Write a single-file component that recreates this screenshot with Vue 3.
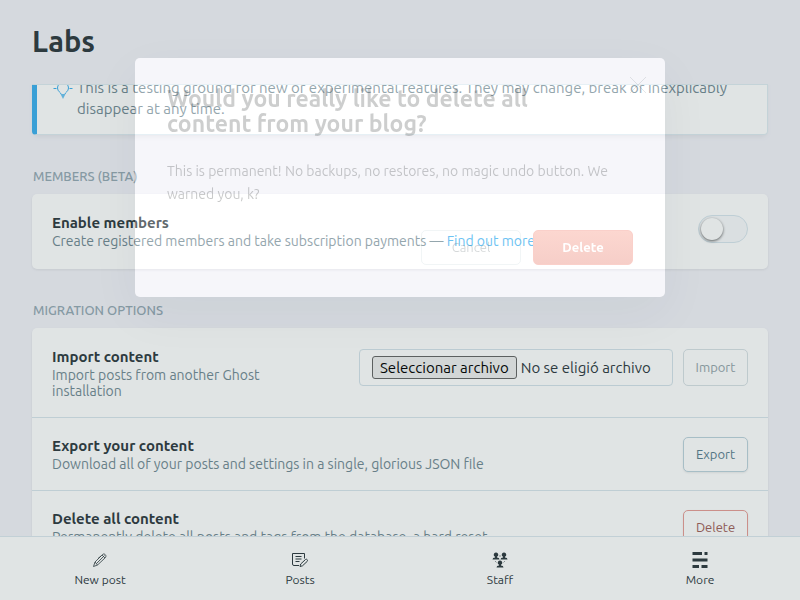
<script setup>
import { ref } from 'vue'

const membersEnabled = ref(false)
const navItems = [
  { id: 'new', label: 'New post' },
  { id: 'posts', label: 'Posts' },
  { id: 'staff', label: 'Staff' },
  { id: 'more', label: 'More' }
]
</script>

<template>
  <div class="app">
    <main class="page">
      <header class="page-header">
        <h1>Labs</h1>
      </header>
      <div class="content">
        <div class="callout">
          <svg class="bulb" viewBox="0 0 20 20" fill="none" stroke="currentColor" aria-hidden="true">
            <path d="M8 13C8 11.5 4.500 10.500 4.500 7a5.500 5.500 0 0 1 11 0c0 3.500-3.500 4.500-3.500 6M.5 7.500h3M16.500 7.500h3" />
            <path d="M7.500 13h5L11 16l-1 2-1-2z" fill="currentColor" stroke="none" opacity="0.75" />
          </svg>
          <p>This is a testing ground for new or experimental features. They may change, break or inexplicably disappear at any time.</p>
        </div>

        <section>
          <h2>Members (beta)</h2>
          <div class="card">
            <div class="row members">
              <div class="info">
                <label class="title" for="members">Enable members</label>
                <p>Create registered members and take subscription payments — <a href="#">Find out more</a></p>
              </div>
              <input id="members" v-model="membersEnabled" class="toggle" type="checkbox">
            </div>
          </div>
        </section>

        <section>
          <h2>Migration options</h2>
          <div class="card">
            <div class="row">
              <div class="info">
                <h3 class="title">Import content</h3>
                <p class="narrow">Import posts from another Ghost installation</p>
              </div>
              <div class="import">
                <label class="file">
                  <input type="file">
                  <span class="choose">Seleccionar archivo</span>
                  <span>No se eligió archivo</span>
                </label>
                <button class="btn muted" type="button">Import</button>
              </div>
            </div>
            <div class="row">
              <div class="info">
                <h3 class="title">Export your content</h3>
                <p>Download all of your posts and settings in a single, glorious JSON file</p>
              </div>
              <button class="btn" type="button">Export</button>
            </div>
            <div class="row">
              <div class="info">
                <h3 class="title">Delete all content</h3>
                <p>Permanently delete all posts and tags from the database, a hard reset</p>
              </div>
              <button class="btn danger" type="button">Delete</button>
            </div>
          </div>
        </section>
      </div>
    </main>

    <nav class="nav">
      <a v-for="item in navItems" :key="item.id" href="#">
        <svg v-if="item.id === 'new'" viewBox="0 0 16 16" fill="none" stroke="currentColor" stroke-width="0.8" aria-hidden="true">
          <path d="M1.500 14.500l1.500-4.500L10.500 2.500c1.500-1.500 4.500.5 3 3L5.500 13zM3 10l2.500 3M10 3l3 3M4.500 11.500L11 5M11 5l1.500-1.500M9 4L6 6.500" />
        </svg>
        <svg v-else-if="item.id === 'posts'" viewBox="0 0 16 16" fill="none" stroke="currentColor" aria-hidden="true">
          <path d="M7 13.500H2Q.5 13.500.5 12V1.500h12v5M3.500 4.500h6M3.500 7h6M3.500 9.500h4" />
          <path d="M8 14.500l.7-2.500L13.500 7.500q1-.7 1.700.2t0 1.700L10.500 13.800z" />
        </svg>
        <svg v-else-if="item.id === 'staff'" viewBox="0 0 16 16" fill="currentColor" aria-hidden="true">
          <path d="M4 .5a2.200 2.200 0 0 1 1 4.200v.8q2.500.2 2.500 2h-7q0-1.800 2.500-2v-.8A2.200 2.200 0 0 1 4 .5zM12 .5a2.200 2.200 0 0 1 1 4.200v.8q2.500.2 2.500 2h-7q0-1.800 2.500-2v-.8A2.200 2.200 0 0 1 12 .5zM8 8.500a2.200 2.200 0 0 1 1 4.200v.8q2.500.2 2.500 2h-7q0-1.800 2.500-2v-.8A2.200 2.200 0 0 1 8 8.500z" />
          <path d="M3 9l1.500 1.500M13 9l-1.500 1.500M7 4h2" fill="none" stroke="currentColor" stroke-width="0.5" />
        </svg>
        <svg v-else viewBox="0 0 16 16" fill="currentColor" aria-hidden="true">
          <path d="M.5 0h9.500v3H.5zM12.500 0h3v3h-3zM.5 6.500h15v3H.5zM.5 13H7v3H.5zM9.500 13h6v3h-6z" />
        </svg>
        <span>{{ item.label }}</span>
      </a>
    </nav>

    <div class="overlay">
      <div class="modal" role="dialog" aria-modal="true" aria-labelledby="confirm-title">
        <button class="close" type="button" aria-label="Close">
          <svg viewBox="0 0 16 16" fill="none" stroke="currentColor"><path d="M0 0l16 16M16 0L0 16" /></svg>
        </button>
        <h2 id="confirm-title">Would you really like to delete all content from your blog?</h2>
        <p>This is permanent! No backups, no restores, no magic undo button. We warned you, k?</p>
        <footer>
          <button class="cancel" type="button">Cancel</button>
          <button class="confirm" type="button">Delete</button>
        </footer>
      </div>
    </div>
  </div>
</template>

<style>
body {
  margin: 0;
}
</style>

<style scoped>
.app,
.app * {
  box-sizing: border-box;
}

.app {
  display: flex;
  flex-direction: column;
  height: 100vh;
  overflow: hidden;
  background: #f3f3f9;
  color: #2f3a3f;
  font-family: Ubuntu, "Noto Sans", sans-serif;
  font-size: 13px;
}

h1,
h2,
h3,
p {
  margin: 0;
}

button {
  font-family: inherit;
}

.page {
  display: flex;
  flex: 1;
  flex-direction: column;
  min-height: 0;
  padding: 0 32px;
}

.page-header {
  display: flex;
  flex: none;
  align-items: center;
  height: 85px;
  padding-bottom: 2px;
  border-bottom: 1px solid #dfecf2;
}

h1 {
  font-size: 29px;
  line-height: 36px;
}

.content {
  flex: 1;
  min-height: 0;
  margin: 0 -32px;
  padding: 0 32px;
  overflow: hidden;
}

.callout {
  display: flex;
  gap: 4px;
  margin-top: -21px;
  padding: 12px 32px 15px 16px;
  border: 1px solid #dfecf2;
  border-left: 5px solid #3eb0ef;
  border-radius: 4px;
  background: #fff;
  color: #738a94;
  font-size: 15px;
  line-height: 21px;
  box-shadow: 0 3px 6px -2px rgba(0, 0, 0, 0.08);
}

.bulb {
  flex: none;
  width: 20px;
  height: 20px;
  margin-top: 4px;
  color: #3eb0ef;
}

section h2 {
  margin: 33px 0 9px;
  padding-left: 1px;
  color: #96a9b4;
  font-size: 13px;
  font-weight: 500;
  line-height: 17px;
  text-transform: uppercase;
}

.card {
  border-radius: 5px;
  background: #fff;
  box-shadow: 0 1px 3px rgba(0, 0, 0, 0.08);
}

.row {
  display: flex;
  align-items: flex-start;
  justify-content: space-between;
  gap: 20px;
  padding: 20px 20px 18px;
}

.row + .row {
  padding-top: 19px;
  border-top: 1px solid #d9e6ed;
}

.members {
  padding-bottom: 20px;
}

.info {
  flex: 1;
}

.title {
  display: block;
  margin-bottom: 2px;
  font-size: 15px;
  font-weight: 700;
  line-height: 17px;
}

.info p {
  color: #738a94;
  font-size: 14px;
  line-height: 16px;
}

.info .narrow {
  max-width: 230px;
}

.info a {
  color: #3eb0ef;
  text-decoration: none;
}

.toggle {
  flex: none;
  width: 50px;
  height: 28px;
  margin: 1px 0 0;
  padding: 2px;
  border: 1px solid #d8e6ee;
  border-radius: 14px;
  background: #f9fafc;
  appearance: none;
}

.toggle::before {
  display: block;
  width: 22px;
  height: 22px;
  border-radius: 50%;
  background: #fff;
  box-shadow: 0 1px 3px rgba(0, 0, 0, 0.6);
  content: "";
}

.toggle:checked::before {
  margin-left: auto;
}

.import {
  display: flex;
  gap: 10px;
  margin-top: 1px;
}

.file {
  position: relative;
  display: flex;
  align-items: center;
  gap: 4px;
  width: 314px;
  height: 37px;
  padding: 0 12px;
  border: 1px solid #d4e2ea;
  border-radius: 4px;
  font-size: 15px;
  line-height: 21px;
  white-space: nowrap;
}

.file input {
  position: absolute;
  inset: 0;
  width: 100%;
  opacity: 0;
}

.choose {
  padding: 0 7px;
  border: 1px solid #666;
  border-radius: 3px;
  background: #efefef;
  color: #000;
}

.btn {
  flex: none;
  min-width: 65px;
  min-height: 35px;
  padding: 0 10px 2px;
  border: 1px solid #bdd3dd;
  border-radius: 5px;
  background: #fff;
  color: #5b7e90;
  font-size: 13px;
  box-shadow: 0 1px 2px rgba(0, 0, 0, 0.08);
}

.muted {
  border-color: #d8e1e5;
  color: #96a5ab;
  box-shadow: none;
}

.danger {
  border-color: #e79d97;
  color: #a1605a;
}

.nav {
  display: grid;
  flex: none;
  grid-template-columns: repeat(4, 1fr);
  height: 64px;
  border-top: 1px solid #dce8ef;
  background: #fff;
}

.nav a {
  display: flex;
  flex-direction: column;
  align-items: center;
  gap: 4px;
  padding-top: 15px;
  color: inherit;
  font-size: 12px;
  line-height: 16px;
  text-decoration: none;
}

.nav svg {
  width: 16px;
  height: 16px;
}

.overlay {
  position: fixed;
  inset: 0;
  display: flex;
  align-items: flex-start;
  justify-content: center;
  padding: 58px 32px 0;
  overflow: hidden;
}

/* The spread shadow dims everything outside the dialog. */
.modal {
  position: relative;
  width: 100%;
  max-width: 530px;
  padding: 28px 32px 32px;
  border-radius: 5px;
  background: rgba(255, 255, 255, 0.24);
  box-shadow: 0 16px 50px rgba(20, 40, 50, 0.05), 0 0 0 100vmax rgba(33, 62, 62, 0.14);
}

.modal h2 {
  max-width: 400px;
  color: rgba(45, 50, 50, 0.24);
  font-size: 23px;
  line-height: 25px;
}

.modal p {
  margin: 24px 0;
  color: rgba(45, 50, 50, 0.26);
  font-size: 14px;
  line-height: 23px;
}

.close {
  position: absolute;
  top: 19px;
  right: 19px;
  width: 16px;
  height: 16px;
  padding: 0;
  border: 0;
  background: none;
  color: rgba(45, 60, 65, 0.12);
}

.close svg {
  display: block;
}

footer {
  display: flex;
  justify-content: flex-end;
  gap: 12px;
}

footer button {
  width: 100px;
  height: 35px;
  padding: 0 0 2px;
  border: 1px solid rgba(120, 160, 170, 0.1);
  border-radius: 5px;
  background: none;
  color: rgba(45, 60, 65, 0.2);
  font-size: 13px;
}

footer .confirm {
  border-color: #fad0ca;
  background: linear-gradient(#fcd7d0, #f6cec8);
  color: #fff;
  font-weight: 600;
}
</style>
